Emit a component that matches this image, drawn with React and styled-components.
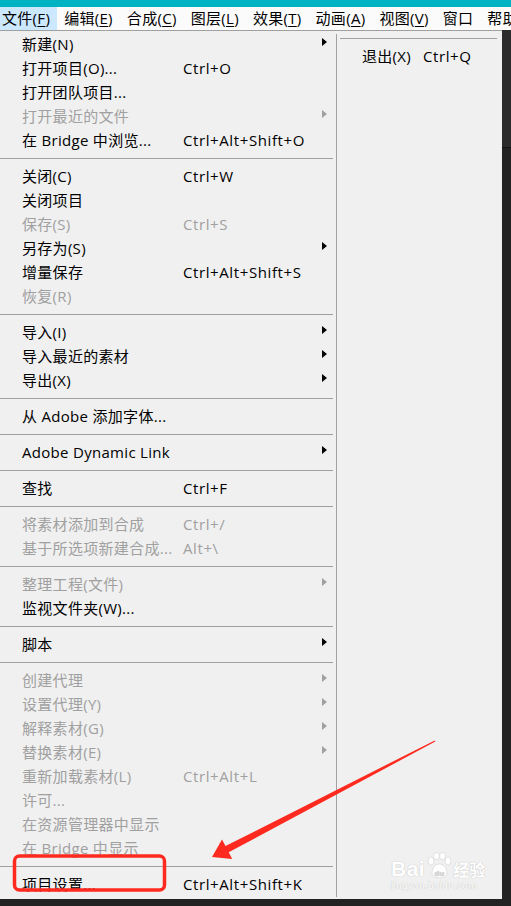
import React from 'react';
import styled, { createGlobalStyle } from 'styled-components';

const GlobalStyle = createGlobalStyle`
  html, body {
    margin: 0;
    padding: 0;
    background: #232323;
    overflow: hidden;
  }
  * {
    box-sizing: border-box;
  }
`;

const topMenus = [
  { name: '文件', key: 'F', active: true },
  { name: '编辑', key: 'E' },
  { name: '合成', key: 'C' },
  { name: '图层', key: 'L' },
  { name: '效果', key: 'T' },
  { name: '动画', key: 'A' },
  { name: '视图', key: 'V' },
  { name: '窗口' },
  { name: '帮助' },
];

const leftGroups = [
  [
    { label: '新建(N)', arrow: true },
    { label: '打开项目(O)...', shortcut: 'Ctrl+O' },
    { label: '打开团队项目...' },
    { label: '打开最近的文件', disabled: true, arrow: true },
    { label: '在 Bridge 中浏览...', shortcut: 'Ctrl+Alt+Shift+O' },
  ],
  [
    { label: '关闭(C)', shortcut: 'Ctrl+W' },
    { label: '关闭项目' },
    { label: '保存(S)', shortcut: 'Ctrl+S', disabled: true },
    { label: '另存为(S)', arrow: true },
    { label: '增量保存', shortcut: 'Ctrl+Alt+Shift+S' },
    { label: '恢复(R)', disabled: true },
  ],
  [
    { label: '导入(I)', arrow: true },
    { label: '导入最近的素材', arrow: true },
    { label: '导出(X)', arrow: true },
  ],
  [{ label: '从 Adobe 添加字体...' }],
  [{ label: 'Adobe Dynamic Link', arrow: true }],
  [{ label: '查找', shortcut: 'Ctrl+F' }],
  [
    { label: '将素材添加到合成', shortcut: 'Ctrl+/', disabled: true },
    { label: '基于所选项新建合成...', shortcut: 'Alt+\\', disabled: true },
  ],
  [
    { label: '整理工程(文件)', disabled: true, arrow: true },
    { label: '监视文件夹(W)...' },
  ],
  [{ label: '脚本', arrow: true }],
  [
    { label: '创建代理', disabled: true, arrow: true },
    { label: '设置代理(Y)', disabled: true, arrow: true },
    { label: '解释素材(G)', disabled: true, arrow: true },
    { label: '替换素材(E)', disabled: true, arrow: true },
    { label: '重新加载素材(L)', shortcut: 'Ctrl+Alt+L', disabled: true },
    { label: '许可...', disabled: true },
    { label: '在资源管理器中显示', disabled: true },
    { label: '在 Bridge 中显示', disabled: true },
  ],
  [{ label: '项目设置...', shortcut: 'Ctrl+Alt+Shift+K' }],
];

function MenuRow({ item, labelWidth }) {
  return (
    <Row $disabled={item.disabled} $labelWidth={labelWidth}>
      <Label>{item.label}</Label>
      <Shortcut>{item.shortcut}</Shortcut>
      <ArrowCell>{item.arrow && <Arrow $disabled={item.disabled} />}</ArrowCell>
    </Row>
  );
}

export default function App() {
  return (
    <Page>
      <GlobalStyle />
      <TitleStrip />
      <MenuBar>
        {topMenus.map((m) => (
          <TopItem key={m.name} $active={m.active}>
            {m.name}
            {m.key && (
              <>
                (<u>{m.key}</u>)
              </>
            )}
          </TopItem>
        ))}
      </MenuBar>
      <Body>
        <Panel>
          <LeftColumn>
            {leftGroups.map((group, gi) => (
              <React.Fragment key={gi}>
                {gi > 0 && <Separator />}
                {group.map((item) => (
                  <MenuRow key={item.label} item={item} labelWidth={161} />
                ))}
              </React.Fragment>
            ))}
          </LeftColumn>
          <Divider />
          <RightColumn>
            <Separator />
            <MenuRow item={{ label: '退出(X)', shortcut: 'Ctrl+Q' }} labelWidth={61} />
          </RightColumn>
        </Panel>
        <SideStrip>
          <SideTop />
        </SideStrip>
      </Body>
      <BottomStrip />

      <Watermark>
        <WmLine>
          <WmBig>Bai</WmBig>
          <Paw viewBox="0 0 28 28">
            <ellipse cx="6" cy="9" rx="3" ry="4" />
            <ellipse cx="11.5" cy="4" rx="3" ry="3.6" />
            <ellipse cx="17.5" cy="4" rx="3" ry="3.6" />
            <ellipse cx="23" cy="9" rx="3" ry="4" />
            <path d="M7 22 C7 15 11 12 14.5 12 C18 12 22 15 22 22 C22 27 7 27 7 22 Z" />
            <text x="14.5" y="24" textAnchor="middle">du</text>
          </Paw>
          <WmCn>经验</WmCn>
        </WmLine>
        <WmSmall>jingyan.baidu.com</WmSmall>
      </Watermark>

      <Annotation viewBox="0 0 511 906">
        <rect x="14.5" y="856" width="150" height="34" rx="5" ry="5" />
        <polygon points="434.7,740.4 225.5,846.1 222,839.4 212,857 232.2,859 228.7,852.3 435.3,741.6" />
      </Annotation>
    </Page>
  );
}

const Page = styled.div`
  position: relative;
  width: 511px;
  height: 906px;
  display: flex;
  flex-direction: column;
  background: #232323;
  font-family: "Open Sans", "Noto Sans CJK SC", sans-serif;
  font-size: 15px;
  letter-spacing: 0.3px;
  color: #000;
  overflow: hidden;
`;

const TitleStrip = styled.div`
  height: 7px;
  background: #00b3c3;
`;

const MenuBar = styled.div`
  height: 23px;
  display: flex;
  align-items: stretch;
  background: #fbfbfb;
  white-space: nowrap;
`;

const TopItem = styled.div`
  display: flex;
  align-items: center;
  padding: ${(p) => (p.$active ? '0 7px 0 2px' : '0 7px')};
  background: ${(p) => (p.$active ? '#cce8ff' : 'transparent')};
  line-height: 23px;

  u {
    text-decoration: underline;
    text-underline-offset: 2px;
  }
`;

const Body = styled.div`
  display: flex;
  height: 869px;
`;

const Panel = styled.div`
  width: 502px;
  display: flex;
  background: #f0f0f0;
  border-top: 1px solid #a0a0a0;
  padding-top: 1px;
`;

const LeftColumn = styled.div`
  width: 336px;
  display: flex;
  flex-direction: column;
`;

const RightColumn = styled.div`
  flex: 1;
  display: flex;
  flex-direction: column;
  padding: 0 2px 0 3px;

  & > div:last-child {
    padding-left: 22px;
  }
`;

const Divider = styled.div`
  width: 1px;
  margin: 2px 0 2px;
  background: #a0a0a0;
`;

const Row = styled.div`
  height: 24px;
  display: grid;
  grid-template-columns: ${(p) => p.$labelWidth}px 1fr 14px;
  align-items: center;
  padding: 0 9px 0 22px;
  line-height: 24px;
  white-space: nowrap;
  color: ${(p) => (p.$disabled ? '#a0a0a0' : '#000')};
`;

const Label = styled.span`
  overflow: visible;
`;

const Shortcut = styled.span`
  letter-spacing: 0.6px;
`;

const ArrowCell = styled.span`
  display: flex;
  justify-content: flex-end;
  align-items: center;
  height: 24px;
  padding-bottom: 4px;
`;

const Arrow = styled.span`
  width: 0;
  height: 0;
  border-top: 4.5px solid transparent;
  border-bottom: 4.5px solid transparent;
  border-left: 5px solid ${(p) => (p.$disabled ? '#a0a0a0' : '#000')};
`;

const Separator = styled.div`
  height: 12px;
  display: flex;
  align-items: center;
  padding-right: 3px;

  &::after {
    content: '';
    flex: 1;
    height: 1px;
    background: #a0a0a0;
  }
`;

const SideStrip = styled.div`
  flex: 1;
  display: flex;
  flex-direction: column;
  background: #232323;
`;

const SideTop = styled.div`
  height: 118px;
  background: #2b2b2b;
  border-bottom: 1px solid #141414;
`;

const BottomStrip = styled.div`
  flex: 1;
  background: #222;
`;

const Watermark = styled.div`
  position: absolute;
  left: 391px;
  top: 852px;
  display: flex;
  flex-direction: column;
  align-items: flex-start;
  color: #fff;
  letter-spacing: 0;
  pointer-events: none;
  text-shadow: 0 0 1px #c8c8c8, 0 0 1px #c8c8c8;
`;

const WmLine = styled.div`
  display: flex;
  align-items: flex-end;
  height: 28px;
`;

const WmBig = styled.span`
  font-family: "Liberation Sans", Arial, sans-serif;
  font-weight: bold;
  font-size: 21px;
  line-height: 22px;
  letter-spacing: 0.5px;
`;

const Paw = styled.svg`
  width: 28px;
  height: 28px;
  fill: #fff;
  stroke: #cfcfcf;
  stroke-width: 0.6;

  text {
    font-family: "Liberation Sans", Arial, sans-serif;
    font-weight: bold;
    font-size: 8px;
    fill: #d8d8d8;
    stroke: none;
  }
`;

const WmCn = styled.span`
  font-family: "Noto Sans CJK SC", sans-serif;
  font-size: 16px;
  font-weight: bold;
  line-height: 22px;
`;

const WmSmall = styled.span`
  font-family: "Liberation Sans", Arial, sans-serif;
  font-size: 10px;
  line-height: 12px;
  letter-spacing: 0.3px;
`;

const Annotation = styled.svg`
  position: absolute;
  left: 0;
  top: 0;
  width: 511px;
  height: 906px;
  pointer-events: none;

  rect {
    fill: none;
    stroke: #ff2a1f;
    stroke-width: 3.5;
  }

  polygon {
    fill: #ff2a1f;
  }
`;
